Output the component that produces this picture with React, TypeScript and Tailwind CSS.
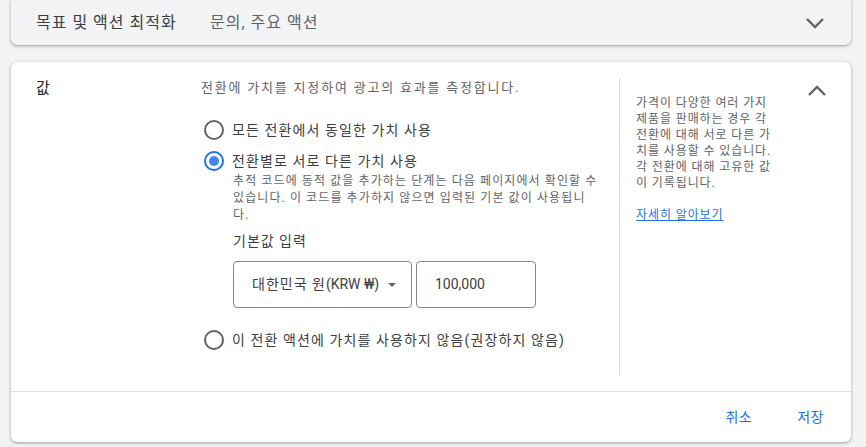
import React, { useState } from 'react';

const FONT = "font-[Roboto,'Noto_Sans_CJK_KR',sans-serif]";
const CARD_SHADOW = 'shadow-[0_1px_2px_rgba(60,64,67,0.3),0_1px_3px_1px_rgba(60,64,67,0.15)]';

function Chevron({ up = false }: { up?: boolean }) {
  return (
    <svg width="20" height="12" viewBox="0 0 20 12" className="text-[#5f6368]">
      <polyline
        points={up ? '2,10 10,2 18,10' : '2,2 10,10 18,2'}
        fill="none"
        stroke="currentColor"
        strokeWidth="2.4"
      />
    </svg>
  );
}

function Radio({ checked, label, onClick }: { checked: boolean; label: string; onClick: () => void }) {
  return (
    <div className="flex items-center h-6 cursor-pointer" onClick={onClick}>
      <div className="w-[31px] flex items-center pl-[3px]">
        <span
          className={
            'w-5 h-5 rounded-full border-2 flex items-center justify-center ' +
            (checked ? 'border-[#1a73e8]' : 'border-[#5f6368]')
          }
        >
          {checked && <span className="w-[10px] h-[10px] rounded-full bg-[#4285f4]" />}
        </span>
      </div>
      <span className="text-[14px] leading-5 tracking-[1.1px] text-[#3c4043]">{label}</span>
    </div>
  );
}

export default function App() {
  const [mode, setMode] = useState(1);

  return (
    <div className={`${FONT} bg-[#f1f3f4] min-h-[447px] w-[866px] pl-[11px] pr-[15px] pb-1`}>
      {/* collapsed section */}
      <div className={`h-[45px] bg-[#f1f3f4] rounded-b-[6px] ${CARD_SHADOW} flex items-center pl-[25px] pr-[26px]`}>
        <span className="w-[174px] text-[16px] tracking-[1px] text-[#3c4043]">목표 및 액션 최적화</span>
        <span className="flex-1 text-[16px] tracking-[1px] text-[#5f6368]">문의, 주요 액션</span>
        <Chevron />
      </div>

      {/* expanded section */}
      <div className={`mt-[17px] bg-white rounded-[6px] ${CARD_SHADOW}`}>
        <div className="flex py-4">
          <div className="w-[190px] pl-[25px] text-[15px] leading-5 text-[#202124]">값</div>

          <div className="w-[418px] pb-[23px]">
            <div className="text-[13px] leading-5 tracking-[1.8px] text-[#5f6368]">
              전환에 가치를 지정하여 광고의 효과를 측정합니다.
            </div>

            <div className="mt-5">
              <Radio checked={mode === 0} label="모든 전환에서 동일한 가치 사용" onClick={() => setMode(0)} />
            </div>
            <div className="mt-[7px]">
              <Radio checked={mode === 1} label="전환별로 서로 다른 가치 사용" onClick={() => setMode(1)} />
            </div>

            <div className="pl-[32px] pr-[21px]">
              <p className="text-[12px] leading-[17px] tracking-[1.1px] text-[#5f6368]">
                추적 코드에 동적 값을 추가하는 단계는 다음 페이지에서 확인할 수 있습니다. 이 코드를 추가하지 않으면 입력된 기본 값이 사용됩니다.
              </p>
              <div className="mt-[7px] text-[14px] leading-5 tracking-[1px] text-[#3c4043]">기본값 입력</div>
              <div className="mt-[10px] flex gap-1">
                <div className="w-[179px] h-[47px] border border-[#80868b] rounded-[4px] flex items-center pl-[18px] pr-[15px] text-[14px] text-[#3c4043]">
                  <span className="flex-1">
                    <span className="tracking-[1px]">대한민국 원</span>(KRW ₩)
                  </span>
                  <svg width="8" height="4" viewBox="0 0 8 4">
                    <path d="M0 0L4 4L8 0z" fill="#5f6368" />
                  </svg>
                </div>
                <div className="w-[120px] h-[47px] border border-[#80868b] rounded-[4px] flex items-center pl-[18px] text-[14px] text-[#3c4043]">
                  100,000
                </div>
              </div>
            </div>

            <div className="mt-5">
              <Radio checked={mode === 2} label="이 전환 액션에 가치를 사용하지 않음(권장하지 않음)" onClick={() => setMode(2)} />
            </div>
          </div>

          <div className="border-l border-[#dadce0] pl-[16px] w-[174px] pt-[17px]">
            <p className="w-[140px] text-[12px] leading-4 tracking-[0.9px] text-[#5f6368]">
              가격이 다양한 여러 가지 제품을 판매하는 경우 각 전환에 대해 서로 다른 가치를 사용할 수 있습니다. 각 전환에 대해 고유한 값이 기록됩니다.
            </p>
            <a href="#" className="block mt-4 text-[12px] leading-4 tracking-[0.9px] text-[#1a73e8] underline">
              자세히 알아보기
            </a>
          </div>

          <div className="flex-1 flex justify-center pt-[7px] pr-[10px]">
            <div className="h-3">
              <Chevron up />
            </div>
          </div>
        </div>

        <div className="border-t border-[#dadce0] h-[51px] flex items-center justify-end pr-[11px] gap-[13px]">
          <button className="px-4 text-[14px] tracking-[0.5px] text-[#1a73e8]">취소</button>
          <button className="px-4 text-[14px] tracking-[0.5px] text-[#1a73e8]">저장</button>
        </div>
      </div>
    </div>
  );
}
